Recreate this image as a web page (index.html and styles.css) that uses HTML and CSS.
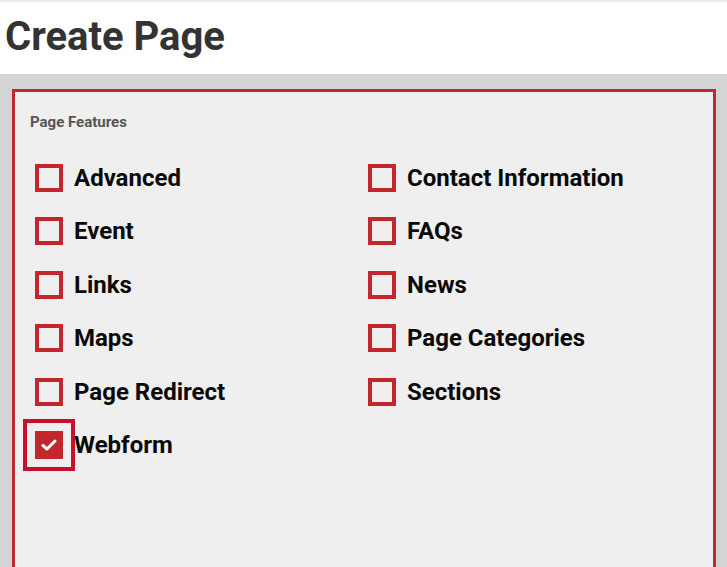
FILE: index.html
```html
<!DOCTYPE html>
<html>
<head>
<meta charset="utf-8">
<link rel="stylesheet" href="styles.css">
</head>
<body>
<header class="header">
  <h1 class="title">Create Page</h1>
</header>
<main class="band">
  <section class="panel">
    <div class="legend">Page Features</div>
    <div class="grid">
      <label class="item"><span class="box"></span><span class="text">Advanced</span></label>
      <label class="item"><span class="box"></span><span class="text">Event</span></label>
      <label class="item"><span class="box"></span><span class="text">Links</span></label>
      <label class="item"><span class="box"></span><span class="text">Maps</span></label>
      <label class="item"><span class="box"></span><span class="text">Page Redirect</span></label>
      <label class="item"><span class="box checked"><svg class="check" viewBox="0 0 16 12" width="16" height="12"><path d="M2 6.5 L6 10 L14 2" fill="none" stroke="#fff" stroke-width="3" stroke-linecap="round" stroke-linejoin="round"/></svg></span><span class="text">Webform</span></label>
      <label class="item"><span class="box"></span><span class="text">Contact Information</span></label>
      <label class="item"><span class="box"></span><span class="text">FAQs</span></label>
      <label class="item"><span class="box"></span><span class="text">News</span></label>
      <label class="item"><span class="box"></span><span class="text">Page Categories</span></label>
      <label class="item"><span class="box"></span><span class="text">Sections</span></label>
    </div>
  </section>
</main>
</body>
</html>
```
FILE: styles.css
```css
html, body {
  margin: 0;
  padding: 0;
  height: 100%;
  overflow: hidden;
  font-family: Roboto, "Liberation Sans", Arial, sans-serif;
}
body {
  display: flex;
  flex-direction: column;
  background: #d3d4d6;
}
.header {
  background: #fff;
  border-top: 2px solid #ececec;
  height: 74px;
  box-sizing: border-box;
  flex: none;
}
.title {
  margin: 0;
  padding: 13px 0 0 5px;
  font-size: 40px;
  line-height: 44px;
  font-weight: 700;
  color: #333;
}
.band {
  flex: 1;
  padding: 15px 11px 0 12px;
  display: flex;
}
.panel {
  flex: 1;
  background: #efefef;
  border: 3px solid #c1272d;
  border-bottom: none;
  padding: 22px 0 0 15px;
  min-height: 600px;
}
.legend {
  font-size: 15px;
  line-height: 16px;
  font-weight: 700;
  color: #555;
  margin-bottom: 34px;
}
.grid {
  display: grid;
  grid-template-columns: 333px 1fr;
  grid-template-rows: repeat(6, 28px);
  grid-auto-flow: column;
  row-gap: 25.4px;
  padding-left: 5px;
}
.item {
  display: flex;
  align-items: center;
  gap: 11px;
}
.box {
  width: 28px;
  height: 28px;
  box-sizing: border-box;
  border: 4px solid #c1272d;
  flex: none;
  display: flex;
  align-items: center;
  justify-content: center;
}
.box.checked {
  background: #c1272d;
  outline: 4px solid #c8102e;
  outline-offset: 8px;
}
.check {
  display: block;
}
.text {
  font-size: 24px;
  font-weight: 700;
  color: #0a0a0a;
  line-height: 28px;
}
```
